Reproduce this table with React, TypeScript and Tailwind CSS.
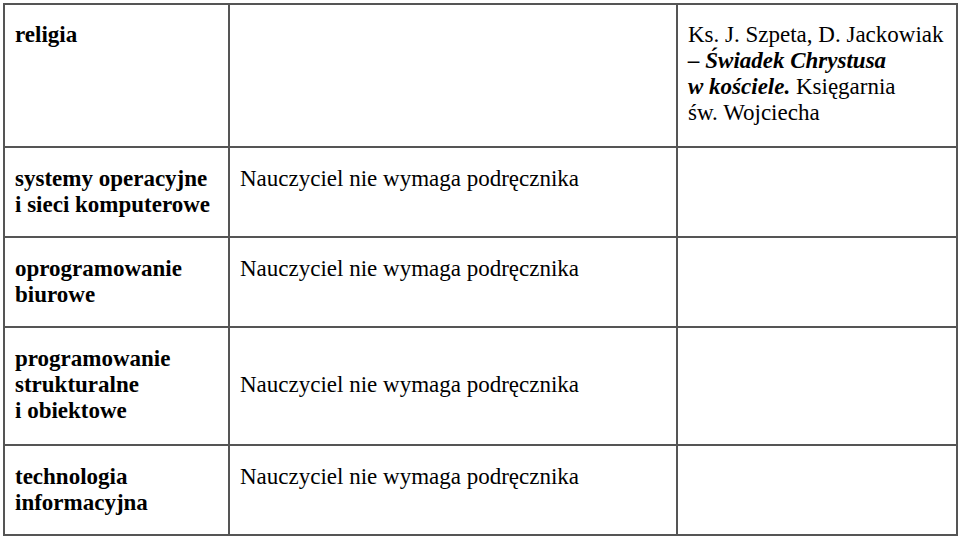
const ROWS: { subject: string[]; note: string; noteTop?: string }[] = [
  { subject: ['systemy operacyjne', 'i sieci komputerowe'], note: 'Nauczyciel nie wymaga podręcznika' },
  { subject: ['oprogramowanie', 'biurowe'], note: 'Nauczyciel nie wymaga podręcznika' },
  {
    subject: ['programowanie', 'strukturalne', 'i obiektowe'],
    note: 'Nauczyciel nie wymaga podręcznika',
    noteTop: 'pt-[44px]',
  },
  { subject: ['technologia', 'informacyjna'], note: 'Nauczyciel nie wymaga podręcznika' },
];

function Cell({ children, className = '' }: { children?: React.ReactNode; className?: string }) {
  return <div className={`bg-white px-[10px] ${className}`}>{children}</div>;
}

export default function App() {
  return (
    <div
      className="h-[536px] w-[960px] overflow-hidden bg-white pl-[3px] pt-[3px] text-[23px] leading-[26px] text-black"
      style={{ fontFamily: '"Liberation Serif", "Times New Roman", serif' }}
    >
      <div className="grid w-[955px] grid-cols-[223px_446px_278px] grid-rows-[141px_88px_88px_116px_88px] gap-[2px] bg-[#555] p-[2px]">
        {/* religia */}
        <Cell className="pt-[17px] font-bold">religia</Cell>
        <Cell />
        <Cell className="pt-[17px]">
          Ks. J. Szpeta, D. Jackowiak
          <br />
          <b className="italic">– Świadek Chrystusa</b>
          <br />
          <b className="italic">w kościele.</b> Księgarnia
          <br />
          św. Wojciecha
        </Cell>

        {ROWS.map((r) => (
          <div key={r.subject.join(' ')} className="contents">
            <Cell className="pt-[18px] font-bold">
              {r.subject.map((line) => (
                <div key={line}>{line}</div>
              ))}
            </Cell>
            <Cell className={r.noteTop ?? 'pt-[18px]'}>{r.note}</Cell>
            <Cell />
          </div>
        ))}
      </div>
    </div>
  );
}
